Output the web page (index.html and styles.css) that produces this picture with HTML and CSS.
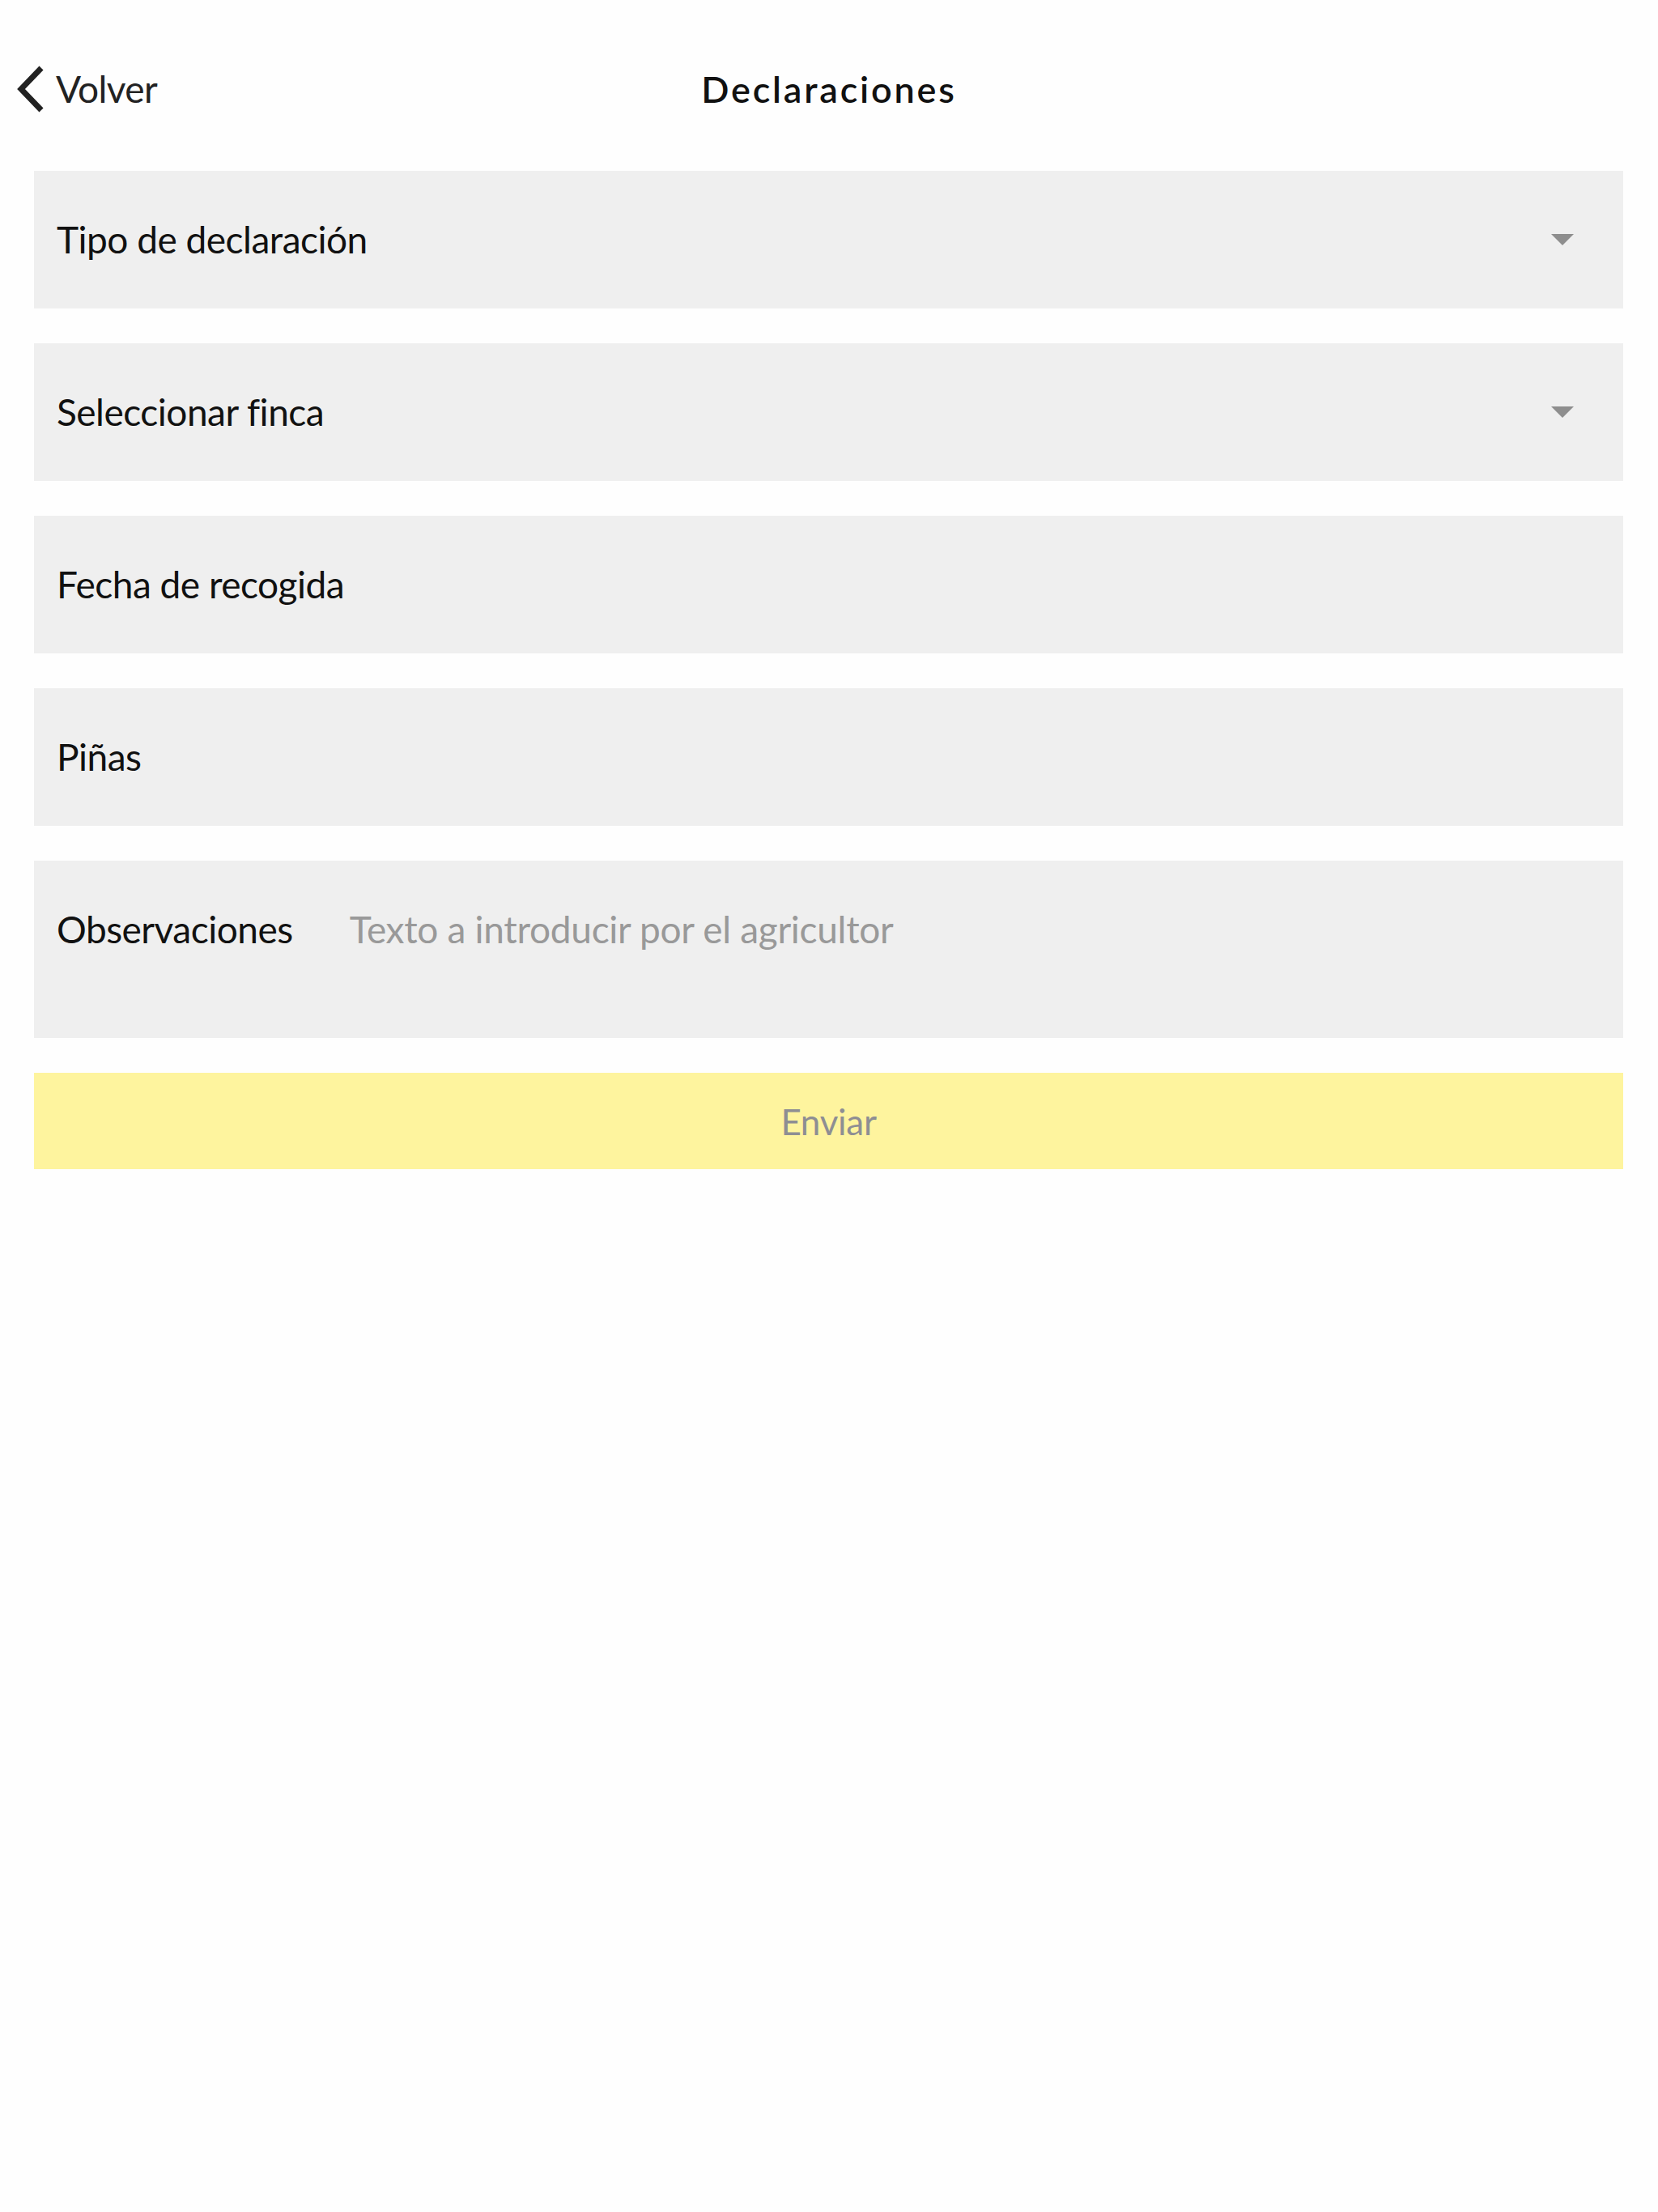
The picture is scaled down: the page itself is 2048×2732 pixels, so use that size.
FILE: index.html
```html
<!DOCTYPE html>
<html lang="es">
<head>
<meta charset="utf-8">
<title>Declaraciones</title>
<link rel="stylesheet" href="styles.css">
</head>
<body>
<div class="page">
  <header class="header">
    <div class="back">
      <svg class="chev" width="36" height="58" viewBox="0 0 36 58"><polyline points="31,3 6,29 31,55" fill="none" stroke="#222" stroke-width="7"/></svg>
      <span class="back-text">Volver</span>
    </div>
    <h1 class="title">Declaraciones</h1>
    <div></div>
  </header>
  <main class="form">
    <div class="field">
      <span class="label">Tipo de declaración</span>
      <span class="caret"></span>
    </div>
    <div class="field">
      <span class="label">Seleccionar finca</span>
      <span class="caret"></span>
    </div>
    <div class="field">
      <span class="label">Fecha de recogida</span>
    </div>
    <div class="field">
      <span class="label">Piñas</span>
    </div>
    <div class="field field-tall">
      <div class="row">
        <span class="label">Observaciones</span>
        <span class="placeholder">Texto a introducir por el agricultor</span>
      </div>
    </div>
    <div class="button">Enviar</div>
  </main>
</div>
</body>
</html>
```
FILE: styles.css
```css
html, body {
  margin: 0;
  padding: 0;
  background: #fefefe;
}
body {
  font-family: "Lato", "Open Sans", sans-serif;
  color: #111;
}
.page {
  width: 2048px;
}
.header {
  display: grid;
  grid-template-columns: 1fr auto 1fr;
  align-items: center;
  height: 150px;
  margin-top: 35px;
}
.back {
  display: flex;
  align-items: center;
  padding-left: 20px;
  gap: 13px;
  color: #222;
}
.chev {
  display: block;
}
.back-text {
  font-size: 46px;
  line-height: 1;
  letter-spacing: -0.6px;
}
.title {
  margin: 0;
  font-size: 45px;
  font-weight: 600;
  letter-spacing: 2.8px;
  line-height: 1;
  color: #111;
}
.form {
  margin: 26px 43px 0 42px;
  display: flex;
  flex-direction: column;
  gap: 43px;
}
.field {
  background: #efefef;
  height: 170px;
  display: flex;
  align-items: center;
  justify-content: space-between;
  padding: 0 61px 0 28px;
}
.field-tall {
  height: 219px;
  align-items: flex-start;
}
.row {
  display: flex;
  align-items: center;
  height: 170px;
}
.label {
  font-size: 46px;
  line-height: 1;
  letter-spacing: -0.5px;
  color: #111;
}
.placeholder {
  font-size: 46px;
  line-height: 1;
  letter-spacing: -0.3px;
  color: #999;
  margin-left: 70px;
}
.caret {
  width: 0;
  height: 0;
  border-left: 14px solid transparent;
  border-right: 14px solid transparent;
  border-top: 14px solid #8e8e8e;
}
.button {
  background: #fef49e;
  height: 119px;
  display: flex;
  align-items: center;
  justify-content: center;
  font-size: 44px;
  letter-spacing: -0.3px;
  color: #8e8e93;
}
```
